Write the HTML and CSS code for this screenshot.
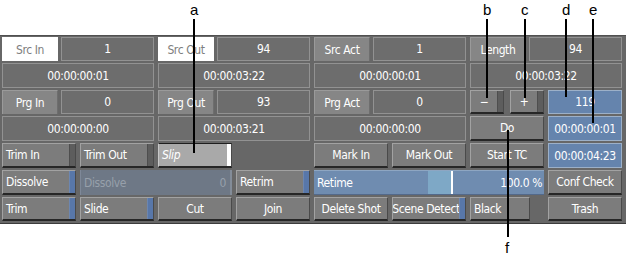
FILE: index.html
```html
<!DOCTYPE html>
<html lang="en">
<head>
    <meta charset="UTF-8">
    <title>Trim Controls</title>
    <link rel="stylesheet" href="styles.css">
</head>
<body>
    <div class="callouts">
        <span class="tag tag-a">a</span>
        <span class="tag tag-b">b</span>
        <span class="tag tag-c">c</span>
        <span class="tag tag-d">d</span>
        <span class="tag tag-e">e</span>
        <span class="tag tag-f">f</span>
        <span class="lead lead-a"></span>
        <span class="lead lead-b"></span>
        <span class="lead lead-c"></span>
        <span class="lead lead-d"></span>
        <span class="lead lead-e"></span>
        <span class="lead lead-f"></span>
    </div>

    <div class="panel">
        <!-- row 1 -->
        <div class="pair"><span class="label label-on">Src In</span><span class="field">1</span></div>
        <div class="pair"><span class="label label-on">Src Out</span><span class="field">94</span></div>
        <div class="pair"><span class="label">Src Act</span><span class="field">1</span></div>
        <div class="pair"><span class="label">Length</span><span class="field">94</span></div>

        <!-- row 2 -->
        <div class="field wide">00:00:00:01</div>
        <div class="field wide">00:00:03:22</div>
        <div class="field wide">00:00:00:01</div>
        <div class="field wide">00:00:03:22</div>

        <!-- row 3 -->
        <div class="pair"><span class="label">Prg In</span><span class="field">0</span></div>
        <div class="pair"><span class="label">Prg Out</span><span class="field">93</span></div>
        <div class="pair"><span class="label">Prg Act</span><span class="field">0</span></div>
        <div class="steps">
            <div class="btn btn-center"><span class="txt">&minus;</span><span class="strip"></span></div>
            <div class="btn btn-center"><span class="txt">+</span><span class="strip"></span></div>
        </div>
        <div class="field field-blue">119</div>

        <!-- row 4 -->
        <div class="field wide">00:00:00:00</div>
        <div class="field wide">00:00:03:21</div>
        <div class="field wide">00:00:00:00</div>
        <div class="btn btn-center"><span class="txt">Do</span></div>
        <div class="field field-blue">00:00:00:01</div>

        <!-- row 5 -->
        <div class="btn"><span class="txt">Trim In</span><span class="strip"></span></div>
        <div class="btn"><span class="txt">Trim Out</span><span class="strip"></span></div>
        <div class="btn btn-slip"><span class="txt">Slip</span><span class="strip"></span></div>
        <div class="blank"></div>
        <div class="btn btn-center"><span class="txt">Mark In</span></div>
        <div class="btn btn-center"><span class="txt">Mark Out</span></div>
        <div class="btn btn-center"><span class="txt">Start TC</span></div>
        <div class="field field-blue">00:00:04:23</div>

        <!-- row 6 -->
        <div class="btn"><span class="txt">Dissolve</span><span class="strip strip-blue"></span></div>
        <div class="dim-field"><span>Dissolve</span><span>0</span></div>
        <div class="btn"><span class="txt">Retrim</span><span class="strip strip-blue"></span></div>
        <div class="retime"><span>Retime</span><span>100.0 %</span></div>
        <div class="btn btn-center"><span class="txt">Conf Check</span></div>

        <!-- row 7 -->
        <div class="btn"><span class="txt">Trim</span><span class="strip strip-blue"></span></div>
        <div class="btn"><span class="txt">Slide</span><span class="strip strip-blue"></span></div>
        <div class="btn btn-center"><span class="txt">Cut</span></div>
        <div class="btn btn-center"><span class="txt">Join</span></div>
        <div class="btn btn-center"><span class="txt">Delete Shot</span></div>
        <div class="btn btn-center"><span class="txt">Scene Detect</span><span class="strip strip-blue"></span></div>
        <div class="btn btn-black"><span class="txt">Black</span></div>
        <div class="btn btn-center"><span class="txt">Trash</span></div>
    </div>
</body>
</html>
```

FILE: styles.css
```css
body {
    margin: 0;
    background-color: #ffffff;
    font-family: "DejaVu Sans Condensed", "Liberation Sans", sans-serif;
}
.callouts {
    height: 35px;
}
.tag {
    position: absolute;
    top: 2px;
    font-family: "Liberation Sans", Arial, sans-serif;
    font-size: 15px;
    line-height: 15px;
    color: #000;
}
.tag-a { left: 190px; }
.tag-b { left: 483px; }
.tag-c { left: 521px; }
.tag-d { left: 562px; }
.tag-e { left: 589px; }
.tag-f { left: 505px; top: 240px; }
.lead {
    position: absolute;
    width: 2px;
    background-color: #000;
    z-index: 2;
}
.lead-a { left: 193px; top: 19px; height: 134px; }
.lead-b { left: 486px; top: 19px; height: 79px; }
.lead-c { left: 524px; top: 19px; height: 79px; }
.lead-d { left: 565px; top: 19px; height: 78px; }
.lead-e { left: 592px; top: 19px; height: 104px; }
.lead-f { left: 507px; top: 130px; height: 107px; }

.panel {
    display: grid;
    grid-template-columns: repeat(8, 74px);
    grid-template-rows: 24px 25px 24px 25px 25px 25px 24px;
    column-gap: 4px;
    row-gap: 2px;
    padding: 1px 0 2px 2px;
    background-color: #676767;
    border-top: 1px solid #505050;
    border-bottom: 1px solid #3c3c3c;
    color: #fff;
    font-size: 12px;
    letter-spacing: -0.4px;
}
.pair {
    grid-column: span 2;
    display: flex;
    gap: 3px;
}
.wide {
    grid-column: span 2;
}
.label {
    width: 56px;
    display: flex;
    align-items: center;
    justify-content: center;
    background-color: #868686;
    border-top: 1px solid #9a9a9a;
    border-left: 1px solid #9a9a9a;
    border-right: 1px solid #6e6e6e;
    box-sizing: border-box;
}
.label-on {
    background-color: #fff;
    color: #7e7e7e;
    border-color: #fff;
}
.field {
    flex: 1;
    display: flex;
    align-items: center;
    justify-content: center;
    background-color: #6d6d6d;
    border: 1px solid #929292;
}
.field-blue {
    background-color: #6584ad;
    border-color: #9cb0c8;
}
.steps {
    display: flex;
    gap: 6px;
}
.steps .btn {
    width: 34px;
}
.btn {
    display: flex;
    background-color: #7c7c7c;
    border-top: 1px solid #a2a2a2;
    border-left: 1px solid #a2a2a2;
    border-right: 1px solid #4a4a4a;
    border-bottom: 2px solid #262626;
    box-sizing: border-box;
}
.btn .txt {
    flex: 1;
    display: flex;
    align-items: center;
    padding-left: 3px;
    white-space: nowrap;
    overflow: hidden;
}
.btn-center .txt {
    justify-content: center;
    padding-left: 0;
}
.strip {
    width: 5px;
    background-color: #5d5d5d;
    border-left: 1px solid #4e4e4e;
}
.strip-blue {
    background-color: #5877a9;
    border-left-color: #6c86b0;
}
.btn-slip {
    background-color: #a9a9a9;
    border-top: 1px solid #1e1e1e;
    border-left-color: #c8c8c8;
}
.btn-slip .txt {
    font-style: italic;
}
.btn-slip .strip {
    width: 4px;
    background-color: #fff;
    border-left: none;
}
.btn-black {
    width: 60px;
}
.dim-field {
    grid-column: span 2;
    display: flex;
    align-items: center;
    justify-content: space-between;
    padding: 0 4px 0 3px;
    background-color: #6e7886;
    border-left: 1px solid #7e8898;
    border-right: 2px solid #838c98;
    color: #97a0ab;
}
.retime {
    grid-column: span 3;
    display: flex;
    align-items: center;
    justify-content: space-between;
    padding: 0 2px 0 3px;
    background: linear-gradient(to right, #6f8cb0 0 114px, #7ea8c6 114px 137px, #ffffff 137px 139px, #6f8cb0 139px);
    border-top: 1px solid #8ea6c2;
    border-bottom: 1px solid #53698a;
}
```
